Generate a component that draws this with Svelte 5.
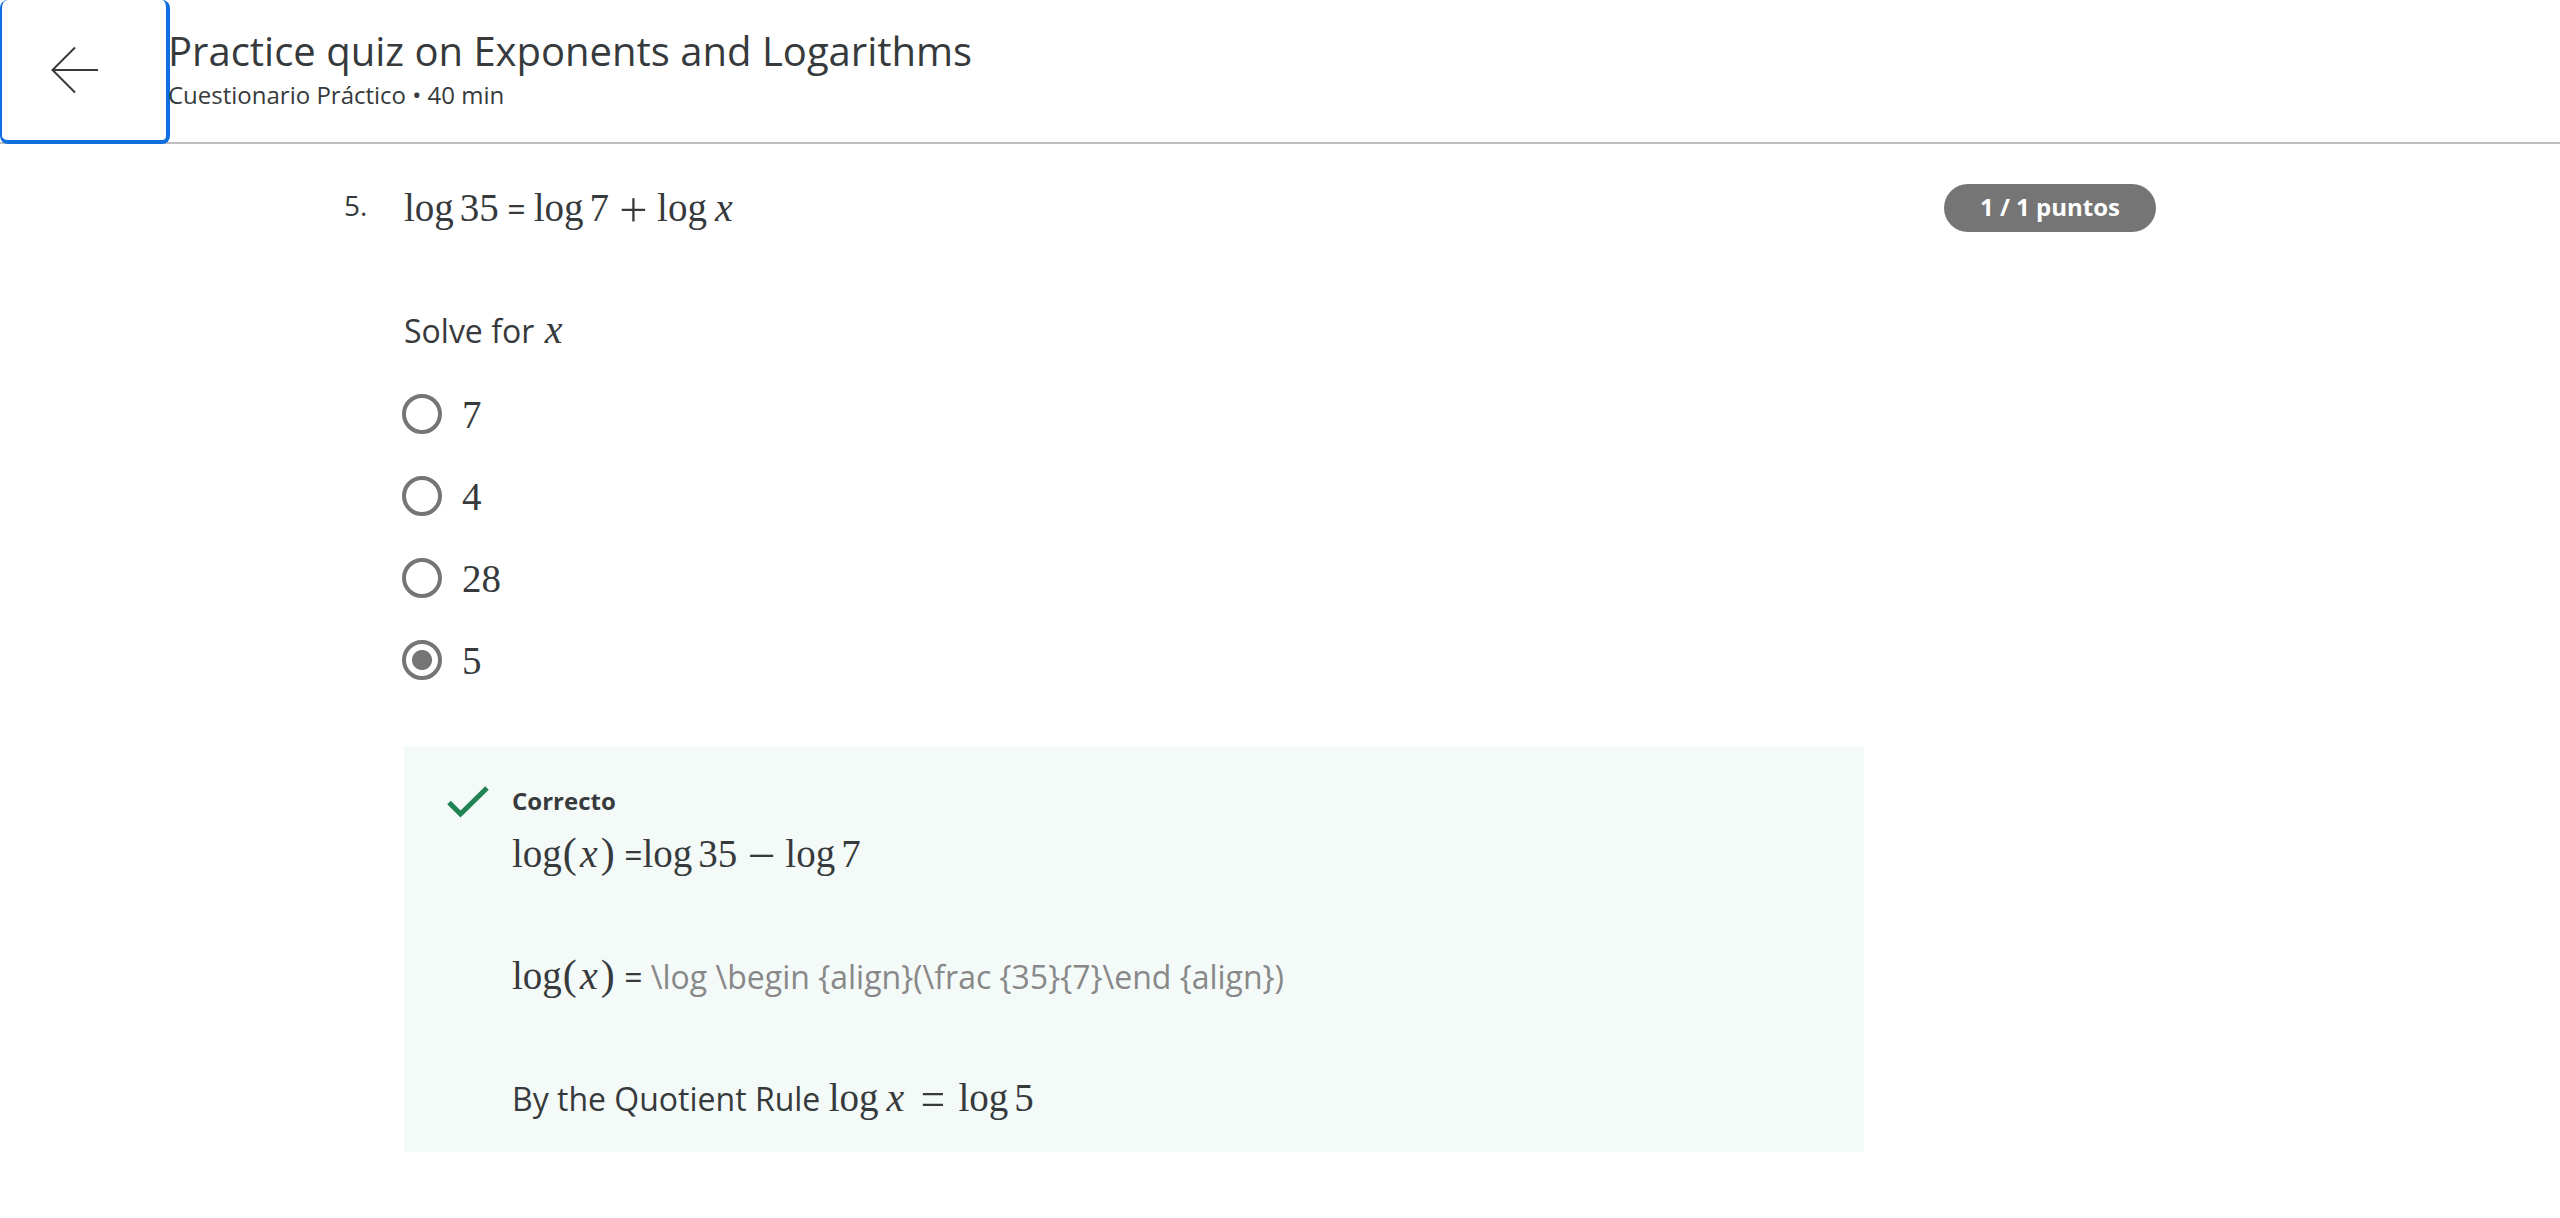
<script>
  const options = ['7', '4', '28', '5'];
  let answer = $state('5');
</script>

{#snippet log(arg)}<span class="fn">log</span><span class="arg">{arg}</span>{/snippet}
{#snippet logX()}<span class="fn">log</span><span class="arg"><i>x</i></span>{/snippet}
{#snippet logOfX()}<span class="math">log<span class="paren">(</span><i>x</i><span class="paren">)</span></span>{/snippet}

<header>
  <button class="back" aria-label="Back">
    <svg viewBox="0 0 48 48" width="48" height="48" fill="none" stroke="#373a3c" stroke-width="2">
      <path d="M48 24H3M25 1.500 2.500 24 25 46.500" />
    </svg>
  </button>
  <div class="heading">
    <h1>Practice quiz on Exponents and Logarithms</h1>
    <p>Cuestionario Práctico • 40 min</p>
  </div>
</header>

<main>
  <div class="number">5.</div>
  <div class="body">
    <div class="prose">
      <p><span class="math">{@render log('35')}</span> = <span class="math">{@render log('7')}<span class="op">+</span>{@render logX()}</span></p>
      <p>Solve for <span class="math"><i>x</i></span></p>
    </div>

    <fieldset aria-label="Answer">
      {#each options as option}
        <label>
          <input type="radio" name="answer" value={option} bind:group={answer} />
          <span class="math">{option}</span>
        </label>
      {/each}
    </fieldset>

    <section class="feedback">
      <svg class="check" viewBox="0 0 42 32" width="42" height="32" fill="none" stroke="#1f8354" stroke-width="5">
        <path d="M2 16.500 13.500 28 40 2" />
      </svg>
      <div>
        <h2>Correcto</h2>
        <div class="prose">
          <p>{@render logOfX()} =<span class="math">{@render log('35')}<span class="op">−</span>{@render log('7')}</span></p>
          <p>{@render logOfX()} = <span class="raw">{'\\log \\begin {align}(\\frac {35}{7}\\end {align})'}</span></p>
          <p>By the Quotient Rule <span class="math">{@render logX()}<span class="op rel">=</span>{@render log('5')}</span></p>
        </div>
      </div>
    </section>
  </div>
  <div class="points">1 / 1 puntos</div>
</main>

<style>
  :global(body) {
    margin: 0;
    background: #fff;
    color: #373a3c;
    font-family: 'Open Sans', 'Noto Sans', sans-serif;
  }
  h1, h2, p { margin: 0; }

  header {
    display: flex;
    height: 144px;
    box-sizing: border-box;
    box-shadow: inset 0 -2px #bdbdbd;
  }
  .back {
    display: flex;
    align-items: center;
    width: 170px;
    padding: 0 0 0 48px;
    background: #fff;
    border: solid #0f6fde;
    border-width: 0 4px 4px 2px;
    border-radius: 8px;
    cursor: pointer;
  }
  .heading { margin-left: -2px; padding-top: 23px; }
  h1 { font-size: 40px; line-height: 56px; font-weight: 400; }
  .heading p { font-size: 24px; line-height: 32px; }

  main {
    display: grid;
    grid-template-columns: 60px 1fr auto;
    align-items: start;
    padding: 35px 404px 64px 344px;
  }
  .number { font-size: 28px; line-height: 52px; }
  .points {
    box-sizing: border-box;
    width: 212px;
    margin: 5px 0 0 80px;
    padding-bottom: 2px;
    border-radius: 24px;
    background: #757575;
    color: #fff;
    text-align: center;
    font-size: 24px;
    line-height: 46px;
    font-weight: 700;
  }

  .prose { display: grid; gap: 64px; font-size: 32px; line-height: 60px; }
  .prose p { height: 58px; white-space: nowrap; }
  .math { font-family: 'Liberation Serif', serif; font-size: 39px; line-height: 1; }
  .math i { display: inline-block; width: 22px; text-align: center; font-size: 40px; line-height: 1; }
  .paren { display: inline-block; width: 16px; text-align: center; font-size: 42px; line-height: 1; }
  .arg { margin-left: 6px; }
  .op {
    display: inline-block;
    width: 30px;
    margin: 0 9px;
    font-family: Inter, sans-serif;
    font-weight: 200;
    font-size: 54px;
    line-height: 30px;
    vertical-align: -4px;
    text-indent: -2px;
  }
  .rel { margin: 0 11px; }
  .raw { color: #888; }

  fieldset {
    display: grid;
    gap: 24px;
    margin: 26px 0 57px;
    padding: 0;
    border: 0;
  }
  label { display: flex; align-items: center; gap: 20px; height: 58px; margin-left: -2px; }
  label .math { line-height: 58px; padding-top: 2px; }
  input {
    appearance: none;
    width: 40px;
    height: 40px;
    margin: 0;
    border: 4px solid #757575;
    border-radius: 50%;
  }
  input:checked { background: radial-gradient(circle, #757575 0 9.500px, transparent 10.500px); }

  .feedback {
    display: flex;
    gap: 23px;
    padding: 37px 43px 25px;
    background: #f4faf8;
  }
  .check { margin-top: 3px; flex: none; }
  h2 { margin-bottom: 6px; font-size: 24px; line-height: 36px; font-weight: 700; }
</style>
